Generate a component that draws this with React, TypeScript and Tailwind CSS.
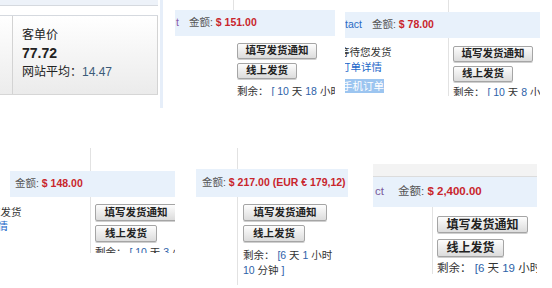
const font = "font-['Liberation_Sans','Noto_Sans_CJK_SC',sans-serif]";

function Btn({ label, className }: { label: string; className: string }) {
  return (
    <div
      className={`flex shrink-0 items-center justify-center rounded-[2px] border border-[#a5a5a5] bg-linear-to-b from-[#fdfdfd] to-[#dcdcdc] font-bold text-[#222] shadow-[0_1px_0_#cfcfcf] ${className}`}
    >
      {label}
    </div>
  );
}

function Amount({ value, className = '' }: { value: string; className?: string }) {
  return (
    <span className={`whitespace-nowrap ${className}`}>
      <span className="text-[#555]">金额: </span>
      <span className="font-bold text-[#c9252c]">{value}</span>
    </span>
  );
}

const num = 'text-[#2d62a8]';

export default function App() {
  return (
    <div className={`relative h-[288px] w-[552px] overflow-hidden bg-white ${font}`}>
      {/* 客单价 card */}
      <div className="absolute left-0 top-0 flex h-[108px] w-[164px] overflow-hidden">
        <div className="flex w-[158px] shrink-0 flex-col">
          <div className="h-[5px] bg-[#edf2f9]" />
          <div className="h-[11px] border-y border-[#d5d9df] bg-white" />
          <div className="flex h-[79px] border-b border-[#d6d6d6]">
            <div className="w-[12px] shrink-0 bg-linear-to-b from-white to-[#ececec]" />
            <div className="flex-1 border-x border-[#d3d3d3] bg-linear-to-b from-white to-[#ebebeb] pl-[9px] pt-[10px] text-[#222]">
              <div className="text-[12px] leading-[18px]">客单价</div>
              <div className="text-[14px] font-bold leading-[18px]">77.72</div>
              <div className="mt-[1px] text-[12px] leading-[18px]">
                网站平均：<span className="text-[#3a5a78]">14.47</span>
              </div>
            </div>
          </div>
        </div>
        <div className="ml-[2px] h-full w-[3px] shrink-0 bg-[#e6eef9]" />
      </div>

      {/* $151 */}
      <div className="absolute left-[175px] top-0 flex h-[96px] w-[160px] flex-col overflow-hidden text-[10.5px]">
        <div className="ml-[58px] h-[10px] shrink-0 border-l border-[#e2e2e2]" />
        <div className="flex h-[26px] shrink-0 items-center bg-[#e8f1fb]">
          <span className="w-[14px] shrink-0 pl-[1px] text-[#8a5aa8]">t</span>
          <Amount value="$ 151.00" />
        </div>
        <div className="flex">
          <div className="w-[62px] shrink-0" />
          <div className="flex shrink-0 flex-col pt-[7px]">
            <Btn label="填写发货通知" className="h-[16px] w-[80px] text-[10.5px]" />
            <Btn label="线上发货" className="mt-[4px] h-[16px] w-[60px] text-[10.5px]" />
            <div className="mt-[5px] whitespace-nowrap leading-[14px] text-[#333]">
              剩余： <span className={num}>[ 10</span> 天 <span className={num}>18</span> 小时
            </div>
          </div>
        </div>
      </div>

      {/* $78 */}
      <div className="absolute left-[345px] top-0 flex h-[96px] w-[195px] flex-col overflow-hidden text-[10.5px]">
        <div className="ml-[103px] h-[12px] shrink-0 border-l border-[#e2e2e2]" />
        <div className="flex h-[26px] shrink-0 items-center bg-[#e8f1fb]">
          <span className="w-[27px] shrink-0 text-[#2a6bc4]">tact</span>
          <Amount value="$ 78.00" />
        </div>
        <div className="flex flex-1">
          <div className="w-[103px] shrink-0 overflow-hidden pt-[7px]">
            <div className="-ml-[6px] whitespace-nowrap leading-[15px] text-[#333]">等待您发货</div>
            <div className="-ml-[5px] whitespace-nowrap leading-[15px] text-[#1b66c9]">订单详情</div>
            <div className="mt-[4px] -ml-[3px] w-fit whitespace-nowrap bg-[#9cc5f0] leading-[14px] text-white">手机订单</div>
          </div>
          <div className="flex shrink-0 flex-col border-l border-[#e2e2e2] pl-[4px] pt-[8px]">
            <Btn label="填写发货通知" className="h-[16px] w-[80px] text-[10.5px]" />
            <Btn label="线上发货" className="mt-[4px] h-[16px] w-[60px] text-[10.5px]" />
            <div className="mt-[3px] whitespace-nowrap leading-[14px] text-[#333]">
              剩余： <span className={num}>[ 10</span> 天 <span className={num}>8</span> 小时
            </div>
          </div>
        </div>
      </div>

      {/* $148 */}
      <div className="absolute left-0 top-[148px] flex h-[105px] w-[175px] flex-col overflow-hidden text-[10.5px]">
        <div className="ml-[90px] h-[23px] shrink-0 border-l border-[#e2e2e2]" />
        <div className="ml-[10px] flex h-[26px] shrink-0 items-center bg-[#e8f1fb] pl-[5px]">
          <Amount value="$ 148.00" />
        </div>
        <div className="flex flex-1">
          <div className="w-[90px] shrink-0 overflow-hidden pt-[8px]">
            <div className="-ml-[31px] whitespace-nowrap leading-[14px] text-[#333]">等待您发货</div>
            <div className="-ml-[34px] whitespace-nowrap leading-[14px] text-[#1b66c9]">订单详情</div>
          </div>
          <div className="flex shrink-0 flex-col border-l border-[#e2e2e2] pl-[4px] pt-[7px]">
            <Btn label="填写发货通知" className="h-[17px] w-[82px] text-[10.5px]" />
            <Btn label="线上发货" className="mt-[4px] h-[17px] w-[62px] text-[10.5px]" />
            <div className="mt-[3px] whitespace-nowrap leading-[14px] text-[#333]">
              剩余： <span className={num}>[ 10</span> 天 <span className={num}>3</span> 小时
            </div>
          </div>
        </div>
      </div>

      {/* $217 */}
      <div className="absolute left-[196px] top-[148px] flex h-[137px] w-[152px] flex-col overflow-hidden text-[10.5px]">
        <div className="ml-[41px] h-[21px] shrink-0 border-l border-[#e2e2e2]" />
        <div className="flex h-[28px] shrink-0 items-center bg-[#e8f1fb] pl-[6px]">
          <Amount value="$ 217.00 (EUR € 179,12)" />
        </div>
        <div className="flex flex-1">
          <div className="w-[41px] shrink-0" />
          <div className="flex shrink-0 flex-col border-l border-[#e2e2e2] pl-[5px] pt-[7px]">
            <Btn label="填写发货通知" className="h-[17px] w-[84px] text-[10.5px]" />
            <Btn label="线上发货" className="mt-[4px] h-[17px] w-[62px] text-[10.5px]" />
            <div className="mt-[6px] whitespace-nowrap leading-[15px] text-[#333]">
              剩余： <span className={num}>[6</span> 天 <span className={num}>1</span> 小时
              <br />
              <span className={num}>10</span> 分钟 <span className={num}>]</span>
            </div>
          </div>
        </div>
      </div>

      {/* $2,400 */}
      <div className="absolute left-[373px] top-[164px] flex h-[110px] w-[164px] flex-col overflow-hidden text-[11.5px]">
        <div className="h-[13px] shrink-0 border-b border-[#dcdcdc] bg-[#f3f3f3]" />
        <div className="flex h-[30px] shrink-0 items-center bg-[#e8f1fb]">
          <span className="w-[25px] shrink-0 pl-[2px] text-[#7a5a9a]">ct</span>
          <Amount value="$ 2,400.00" />
        </div>
        <div className="flex flex-1">
          <div className="w-[59px] shrink-0" />
          <div className="flex shrink-0 flex-col border-l border-[#e2e2e2] pl-[4px] pt-[9px]">
            <Btn label="填写发货通知" className="h-[17px] w-[91px] text-[12px]" />
            <Btn label="线上发货" className="mt-[6px] h-[18px] w-[67px] text-[12px]" />
            <div className="mt-[3px] whitespace-nowrap leading-[16px] text-[#333]">
              剩余： <span className={num}>[6</span> 天 <span className={num}>19</span> 小时
            </div>
          </div>
        </div>
      </div>
    </div>
  );
}
